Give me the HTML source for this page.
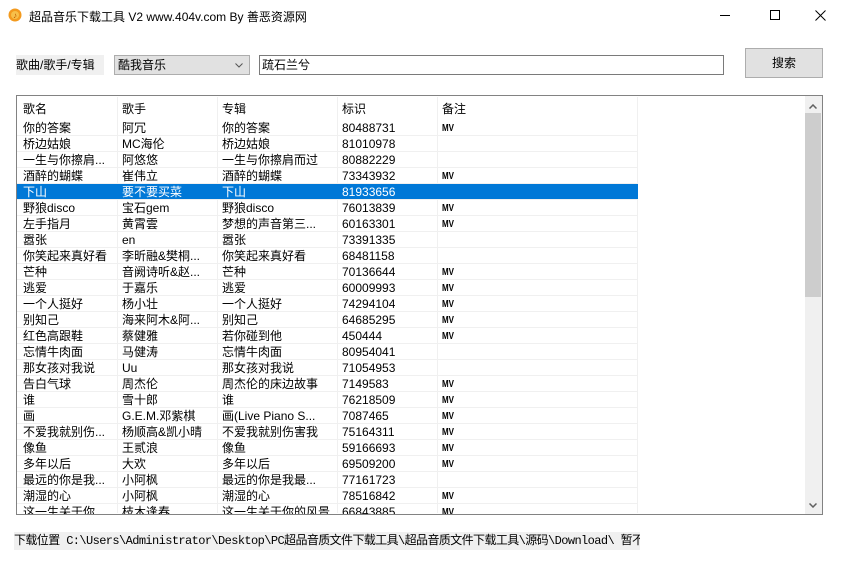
<!DOCTYPE html>
<html><head><meta charset="utf-8"><style>
*{margin:0;padding:0;box-sizing:border-box}
body{width:843px;height:571px;background:#fff;position:relative;overflow:hidden;font-family:"Liberation Sans","Noto Sans CJK SC",sans-serif;font-size:12px;color:#000}
.a{position:absolute;white-space:nowrap}
.row{position:absolute;left:17px;width:621px;height:16px;border-bottom:1px solid #f0f0f0}
.row span{position:absolute;top:1px;line-height:15px;overflow:hidden;white-space:nowrap}
.row span:nth-child(5){font-size:10px;font-weight:bold;transform:scaleX(0.8);transform-origin:left}
.sel{background:#0078d7;color:#fff}
.vl{position:absolute;width:1px;background:#f0f0f0;top:97px;height:416px}
</style></head><body>
<svg class="a" style="left:8px;top:8px" width="14" height="14"><circle cx="7" cy="7" r="6.5" fill="#f39a1e"/><circle cx="7" cy="7" r="4" fill="#f7c04a"/><text x="5" y="10" font-size="8" fill="#c05a00">♪</text></svg>
<div class="a" style="left:29px;top:8px;font-size:12px">超品音乐下载工具 V2 www.404v.com By 善恶资源网</div>
<div class="a" style="left:720px;top:15px;width:10px;height:1px;background:#000"></div>
<div class="a" style="left:770px;top:10px;width:10px;height:10px;border:1px solid #000"></div>
<svg class="a" style="left:815px;top:10px" width="11" height="11"><path d="M0.5 0.5L10.5 10.5M10.5 0.5L0.5 10.5" stroke="#000" stroke-width="1"/></svg>

<div class="a" style="left:16px;top:55px;width:88px;height:20px;background:#f0f0f0;line-height:20px">歌曲/歌手/专辑</div>
<div class="a" style="left:114px;top:55px;width:136px;height:20px;background:#e1e1e1;border:1px solid #adadad;line-height:18px;padding-left:3px">酷我音乐</div>
<svg class="a" style="left:235px;top:63px" width="8" height="5"><path d="M0.5 0.5L4 4L7.5 0.5" stroke="#555" fill="none"/></svg>
<div class="a" style="left:259px;top:55px;width:465px;height:20px;border:1px solid #7a7a7a;line-height:18px;padding-left:2px">疏石兰兮</div>
<div class="a" style="left:745px;top:48px;width:78px;height:30px;background:#e1e1e1;border:1px solid #adadad;text-align:center;line-height:28px">搜索</div>

<div class="a" style="left:16px;top:95px;width:807px;height:420px;border:1px solid #828282"></div>
<div class="a" style="left:805px;top:96px;width:17px;height:418px;background:#f0f0f0"></div>
<div class="a" style="left:805px;top:113px;width:16px;height:184px;background:#cdcdcd"></div>
<svg class="a" style="left:809px;top:104px" width="8" height="5"><path d="M0.5 4.5L4 1L7.5 4.5" stroke="#606060" stroke-width="1.5" fill="none"/></svg>
<svg class="a" style="left:809px;top:503px" width="8" height="5"><path d="M0.5 0.5L4 4L7.5 0.5" stroke="#606060" stroke-width="1.5" fill="none"/></svg>

<div class="a" style="left:23px;top:100px">歌名</div>
<div class="a" style="left:122px;top:100px">歌手</div>
<div class="a" style="left:222px;top:100px">专辑</div>
<div class="a" style="left:342px;top:100px">标识</div>
<div class="a" style="left:442px;top:100px">备注</div>
<div class="vl" style="left:117px"></div><div class="vl" style="left:217px"></div><div class="vl" style="left:337px"></div><div class="vl" style="left:437px"></div><div class="vl" style="left:637px"></div>

<div class="row" style="top:120px"><span style="left:6px">你的答案</span><span style="left:105px">阿冗</span><span style="left:205px">你的答案</span><span style="left:325px">80488731</span><span style="left:425px">MV</span></div>
<div class="row" style="top:136px"><span style="left:6px">桥边姑娘</span><span style="left:105px">MC海伦</span><span style="left:205px">桥边姑娘</span><span style="left:325px">81010978</span></div>
<div class="row" style="top:152px"><span style="left:6px">一生与你擦肩...</span><span style="left:105px">阿悠悠</span><span style="left:205px">一生与你擦肩而过</span><span style="left:325px">80882229</span></div>
<div class="row" style="top:168px"><span style="left:6px">酒醉的蝴蝶</span><span style="left:105px">崔伟立</span><span style="left:205px">酒醉的蝴蝶</span><span style="left:325px">73343932</span><span style="left:425px">MV</span></div>
<div class="row sel" style="top:184px"><span style="left:6px">下山</span><span style="left:105px">要不要买菜</span><span style="left:205px">下山</span><span style="left:325px">81933656</span></div>
<div class="row" style="top:200px"><span style="left:6px">野狼disco</span><span style="left:105px">宝石gem</span><span style="left:205px">野狼disco</span><span style="left:325px">76013839</span><span style="left:425px">MV</span></div>
<div class="row" style="top:216px"><span style="left:6px">左手指月</span><span style="left:105px">黄霄雲</span><span style="left:205px">梦想的声音第三...</span><span style="left:325px">60163301</span><span style="left:425px">MV</span></div>
<div class="row" style="top:232px"><span style="left:6px">嚣张</span><span style="left:105px">en</span><span style="left:205px">嚣张</span><span style="left:325px">73391335</span></div>
<div class="row" style="top:248px"><span style="left:6px">你笑起来真好看</span><span style="left:105px">李昕融&amp;樊桐...</span><span style="left:205px">你笑起来真好看</span><span style="left:325px">68481158</span></div>
<div class="row" style="top:264px"><span style="left:6px">芒种</span><span style="left:105px">音阙诗听&amp;赵...</span><span style="left:205px">芒种</span><span style="left:325px">70136644</span><span style="left:425px">MV</span></div>
<div class="row" style="top:280px"><span style="left:6px">逃爱</span><span style="left:105px">于嘉乐</span><span style="left:205px">逃爱</span><span style="left:325px">60009993</span><span style="left:425px">MV</span></div>
<div class="row" style="top:296px"><span style="left:6px">一个人挺好</span><span style="left:105px">杨小壮</span><span style="left:205px">一个人挺好</span><span style="left:325px">74294104</span><span style="left:425px">MV</span></div>
<div class="row" style="top:312px"><span style="left:6px">别知己</span><span style="left:105px">海来阿木&amp;阿...</span><span style="left:205px">别知己</span><span style="left:325px">64685295</span><span style="left:425px">MV</span></div>
<div class="row" style="top:328px"><span style="left:6px">红色高跟鞋</span><span style="left:105px">蔡健雅</span><span style="left:205px">若你碰到他</span><span style="left:325px">450444</span><span style="left:425px">MV</span></div>
<div class="row" style="top:344px"><span style="left:6px">忘情牛肉面</span><span style="left:105px">马健涛</span><span style="left:205px">忘情牛肉面</span><span style="left:325px">80954041</span></div>
<div class="row" style="top:360px"><span style="left:6px">那女孩对我说</span><span style="left:105px">Uu</span><span style="left:205px">那女孩对我说</span><span style="left:325px">71054953</span></div>
<div class="row" style="top:376px"><span style="left:6px">告白气球</span><span style="left:105px">周杰伦</span><span style="left:205px">周杰伦的床边故事</span><span style="left:325px">7149583</span><span style="left:425px">MV</span></div>
<div class="row" style="top:392px"><span style="left:6px">谁</span><span style="left:105px">雪十郎</span><span style="left:205px">谁</span><span style="left:325px">76218509</span><span style="left:425px">MV</span></div>
<div class="row" style="top:408px"><span style="left:6px">画</span><span style="left:105px">G.E.M.邓紫棋</span><span style="left:205px">画(Live Piano S...</span><span style="left:325px">7087465</span><span style="left:425px">MV</span></div>
<div class="row" style="top:424px"><span style="left:6px">不爱我就别伤...</span><span style="left:105px">杨顺高&amp;凯小晴</span><span style="left:205px">不爱我就别伤害我</span><span style="left:325px">75164311</span><span style="left:425px">MV</span></div>
<div class="row" style="top:440px"><span style="left:6px">像鱼</span><span style="left:105px">王贰浪</span><span style="left:205px">像鱼</span><span style="left:325px">59166693</span><span style="left:425px">MV</span></div>
<div class="row" style="top:456px"><span style="left:6px">多年以后</span><span style="left:105px">大欢</span><span style="left:205px">多年以后</span><span style="left:325px">69509200</span><span style="left:425px">MV</span></div>
<div class="row" style="top:472px"><span style="left:6px">最远的你是我...</span><span style="left:105px">小阿枫</span><span style="left:205px">最远的你是我最...</span><span style="left:325px">77161723</span></div>
<div class="row" style="top:488px"><span style="left:6px">潮湿的心</span><span style="left:105px">小阿枫</span><span style="left:205px">潮湿的心</span><span style="left:325px">78516842</span><span style="left:425px">MV</span></div>
<div class="row" style="top:504px;height:10px;overflow:hidden;border:none"><span style="left:6px">这一生关于你</span><span style="left:105px">枝木逢春</span><span style="left:205px">这一生关于你的风景</span><span style="left:325px">66843885</span><span style="left:425px">MV</span></div>

<div class="a" style="left:14px;top:532px;width:626px;height:18px;background:#f0f0f0;line-height:18px;overflow:hidden;font-family:'Liberation Mono','Noto Sans CJK SC',monospace;font-size:12px;letter-spacing:-0.6px">下载位置 C:\Users\Administrator\Desktop\PC超品音质文件下载工具\超品音质文件下载工具\源码\Download\ 暂不支持</div>
</body></html>
